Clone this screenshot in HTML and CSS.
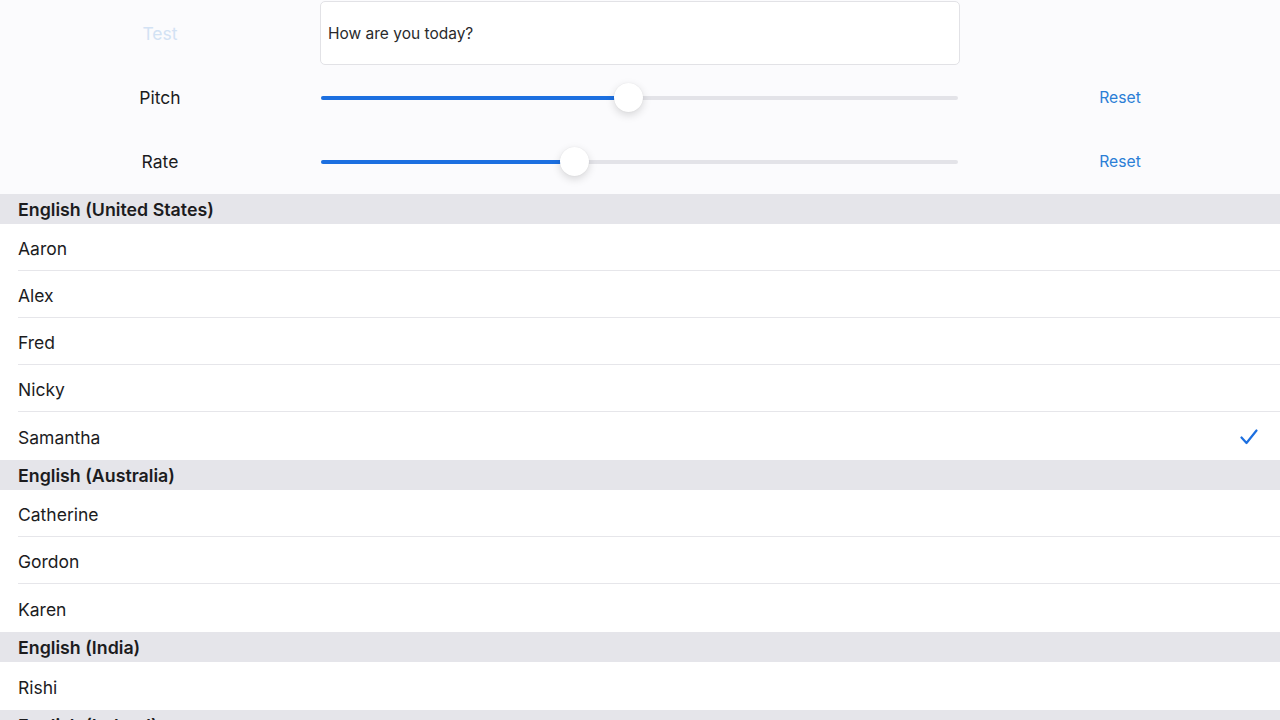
FILE: index.html
```html
<!DOCTYPE html>
<html>
<head>
<meta charset="utf-8">
<link rel="stylesheet" href="styles.css">
</head>
<body>
<div class="controls">
  <div class="label test">Test</div>
  <div class="field first"><div class="input">How are you today?</div></div>
  <div class="action"></div>

  <div class="label">Pitch</div>
  <div class="field"><div class="slider"><div class="fill" style="width:48.2%"></div><div class="thumb" style="left:48.2%"></div></div></div>
  <div class="action"><span class="reset">Reset</span></div>

  <div class="label">Rate</div>
  <div class="field"><div class="slider"><div class="fill" style="width:39.7%"></div><div class="thumb" style="left:39.7%"></div></div></div>
  <div class="action"><span class="reset">Reset</span></div>
</div>

<div class="list">
  <div class="header">English (United States)</div>
  <div class="row">Aaron</div>
  <div class="row">Alex</div>
  <div class="row">Fred</div>
  <div class="row">Nicky</div>
  <div class="row last">Samantha
    <svg class="check" width="18" height="16" viewBox="0 0 18 16"><path d="M1.5 8.5 L6.5 14 L16.5 1.5" fill="none" stroke="#1c6fe0" stroke-width="2.2" stroke-linecap="round" stroke-linejoin="round"/></svg>
  </div>
  <div class="header">English (Australia)</div>
  <div class="row">Catherine</div>
  <div class="row">Gordon</div>
  <div class="row last">Karen</div>
  <div class="header">English (India)</div>
  <div class="row last">Rishi</div>
  <div class="header">English (Ireland)</div>
</div>
</body>
</html>
```
FILE: styles.css
```css
* { box-sizing: border-box; }
html, body { margin: 0; padding: 0; }
body {
  width: 1280px;
  height: 720px;
  overflow: hidden;
  background: #fbfbfd;
  font-family: Inter, "Noto Sans", sans-serif;
  color: #1c1c1e;
}
.controls {
  display: grid;
  grid-template-columns: 320px 640px 320px;
  grid-template-rows: 64px 64px 64px;
  padding-top: 1px;
  padding-bottom: 1px;
  background: #fbfbfd;
}
.label {
  display: flex;
  align-items: center;
  justify-content: center;
  font-size: 17.5px;
  color: #1c1c1e;
  padding-top: 1px;
}
.label.test { color: #d3e2f4; }
.field {
  display: flex;
  align-items: center;
  padding-top: 1px;
}
.field.first { padding-top: 0; }
.input {
  width: 640px;
  height: 64px;
  border: 1px solid #e2e2e6;
  border-radius: 5px;
  background: #fff;
  display: flex;
  align-items: center;
  padding-left: 7px;
  font-size: 15.5px;
  color: #2a2a2c;
}
.slider {
  position: relative;
  margin-left: 1px;
  width: 637px;
  height: 4px;
  border-radius: 2px;
  background: #e3e3e8;
}
.fill {
  height: 4px;
  border-radius: 2px;
  background: #1c6fe0;
}
.thumb {
  position: absolute;
  top: 50%;
  width: 29px;
  height: 29px;
  margin-left: -14px;
  margin-top: -14.5px;
  border-radius: 50%;
  background: #fff;
  box-shadow: 0 3px 8px rgba(0,0,0,0.15), 0 0 1px rgba(0,0,0,0.1);
}
.action {
  display: flex;
  align-items: center;
  justify-content: center;
  padding-top: 1px;
}
.reset {
  font-size: 15.7px;
  color: #2b7fd6;
}
.list { background: #fff; }
.header {
  height: 30px;
  background: #e5e5ea;
  padding-left: 18px;
  padding-top: 1px;
  display: flex;
  align-items: center;
  font-size: 17.8px;
  font-weight: 600;
  color: #1c1c1e;
}
.row {
  height: 47px;
  margin-left: 18px;
  border-bottom: 1px solid #e6e6ea;
  display: flex;
  align-items: center;
  justify-content: space-between;
  padding-right: 22px;
  padding-top: 2px;
  font-size: 17.5px;
  color: #1c1c1e;
  background: #fff;
}
.row.last { border-bottom: none; height: 48px; }
.check { display: block; margin-top: -1px; }
```
